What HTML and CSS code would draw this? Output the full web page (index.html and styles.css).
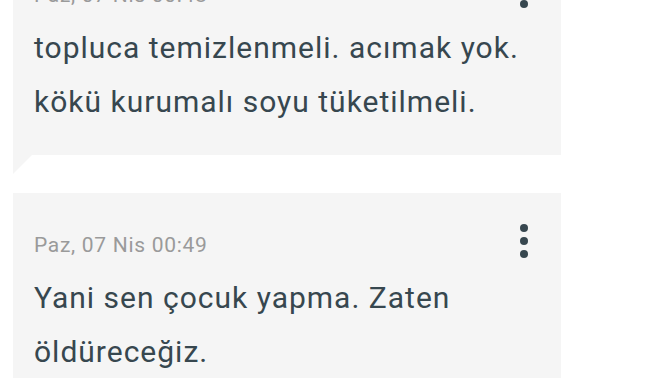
FILE: index.html
```html
<!DOCTYPE html>
<html lang="tr">
<head>
  <meta charset="UTF-8" />
  <meta name="viewport" content="width=device-width, initial-scale=1.0" />
  <title>Mesajlar</title>
  <link rel="stylesheet" href="styles.css">
</head>
<body>
  <div class="thread">
    <div class="message">
      <div class="message-head">
        <span class="message-date">Paz, 07 Nis 00:48</span>
        <button class="more-button" aria-label="Diğer">
          <svg width="8" height="34" viewBox="0 0 8 34"><circle cx="4" cy="4" r="4"/><circle cx="4" cy="17" r="4"/><circle cx="4" cy="30" r="4"/></svg>
        </button>
      </div>
      <p class="message-text">topluca temizlenmeli. acımak yok.<br>kökü kurumalı soyu tüketilmeli.</p>
    </div>

    <div class="message">
      <div class="message-head">
        <span class="message-date">Paz, 07 Nis 00:49</span>
        <button class="more-button" aria-label="Diğer">
          <svg width="8" height="34" viewBox="0 0 8 34"><circle cx="4" cy="4" r="4"/><circle cx="4" cy="17" r="4"/><circle cx="4" cy="30" r="4"/></svg>
        </button>
      </div>
      <p class="message-text">Yani sen çocuk yapma. Zaten<br>öldüreceğiz.</p>
    </div>
  </div>
</body>
</html>
```

FILE: styles.css
```css
:root {
  --bubble-bg: #f5f5f5;
  --text: #37474f;
  --muted: #9a9a9a;
}

body {
  margin: 0;
  background-color: #fff;
  font-family: Roboto, "Noto Sans", sans-serif;
  color: var(--text);
  overflow: hidden;
}

.thread {
  display: flex;
  flex-direction: column;
  gap: 38px;
  margin-top: -57px;
  padding-left: 13px;
}

.message {
  position: relative;
  width: 548px;
  box-sizing: border-box;
  padding: 31px 33px 26px 21px;
  background-color: var(--bubble-bg);
}

/* little tail under the bubble */
.message::after {
  content: "";
  position: absolute;
  left: 0;
  top: 100%;
  border-top: 19px solid var(--bubble-bg);
  border-right: 19px solid transparent;
}

.message-head {
  display: flex;
  justify-content: space-between;
  align-items: flex-start;
}

.message-date {
  margin-top: 9px;
  font-size: 21px;
  line-height: 24px;
  letter-spacing: 0.7px;
  color: var(--muted);
}

.more-button {
  display: block;
  padding: 0;
  border: none;
  background: transparent;
  fill: var(--text);
  cursor: pointer;
}

.more-button svg {
  display: block;
}

.message-text {
  margin: 13px 0 0;
  font-size: 30px;
  line-height: 54px;
  letter-spacing: 1px;
}
```
